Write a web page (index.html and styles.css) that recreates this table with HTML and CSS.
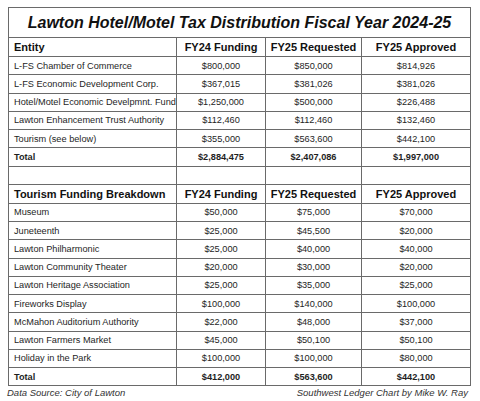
FILE: index.html
```html
<!DOCTYPE html>
<html lang="en">
<head>
    <meta charset="UTF-8">
    <meta name="viewport" content="width=device-width, initial-scale=1.0">
    <title>Lawton Hotel/Motel Tax Distribution</title>
    <link rel="stylesheet" href="styles.css">
</head>
<body>

<div class="sheet">
    <table class="tax-table">
        <colgroup>
            <col class="col-name">
            <col class="col-fy24">
            <col class="col-req">
            <col class="col-appr">
        </colgroup>
        <tr class="title-row">
            <th colspan="4">Lawton Hotel/Motel Tax Distribution Fiscal Year 2024-25</th>
        </tr>
        <tr class="head-row">
            <th class="name">Entity</th>
            <th>FY24 Funding</th>
            <th>FY25 Requested</th>
            <th>FY25 Approved</th>
        </tr>
        <tr><td class="name">L-FS Chamber of Commerce</td><td>$800,000</td><td>$850,000</td><td>$814,926</td></tr>
        <tr><td class="name">L-FS Economic Development Corp.</td><td>$367,015</td><td>$381,026</td><td>$381,026</td></tr>
        <tr><td class="name">Hotel/Motel Economic Develpmnt. Fund</td><td>$1,250,000</td><td>$500,000</td><td>$226,488</td></tr>
        <tr><td class="name">Lawton Enhancement Trust Authority</td><td>$112,460</td><td>$112,460</td><td>$132,460</td></tr>
        <tr><td class="name">Tourism (see below)</td><td>$355,000</td><td>$563,600</td><td>$442,100</td></tr>
        <tr class="total"><td class="name">Total</td><td>$2,884,475</td><td>$2,407,086</td><td>$1,997,000</td></tr>
        <tr><td></td><td></td><td></td><td></td></tr>
        <tr class="head-row">
            <th class="name">Tourism Funding Breakdown</th>
            <th>FY24 Funding</th>
            <th>FY25 Requested</th>
            <th>FY25 Approved</th>
        </tr>
        <tr><td class="name">Museum</td><td>$50,000</td><td>$75,000</td><td>$70,000</td></tr>
        <tr><td class="name">Juneteenth</td><td>$25,000</td><td>$45,500</td><td>$20,000</td></tr>
        <tr><td class="name">Lawton Philharmonic</td><td>$25,000</td><td>$40,000</td><td>$40,000</td></tr>
        <tr><td class="name">Lawton Community Theater</td><td>$20,000</td><td>$30,000</td><td>$20,000</td></tr>
        <tr><td class="name">Lawton Heritage Association</td><td>$25,000</td><td>$35,000</td><td>$25,000</td></tr>
        <tr><td class="name">Fireworks Display</td><td>$100,000</td><td>$140,000</td><td>$100,000</td></tr>
        <tr><td class="name">McMahon Auditorium Authority</td><td>$22,000</td><td>$48,000</td><td>$37,000</td></tr>
        <tr><td class="name">Lawton Farmers Market</td><td>$45,000</td><td>$50,100</td><td>$50,100</td></tr>
        <tr><td class="name">Holiday in the Park</td><td>$100,000</td><td>$100,000</td><td>$80,000</td></tr>
        <tr class="total"><td class="name">Total</td><td>$412,000</td><td>$563,600</td><td>$442,100</td></tr>
    </table>

    <div class="footer">
        <span>Data Source: City of Lawton</span>
        <span>Southwest Ledger Chart by Mike W. Ray</span>
    </div>
</div>

</body>
</html>
```

FILE: styles.css
```css
body {
    margin: 0;
    background-color: #fff;
    font-family: "Liberation Sans", Arial, sans-serif;
    color: #1e1e1e;
}
.sheet {
    width: 462px;
    padding: 7px 0 0 8px;
}
.tax-table {
    width: 462px;
    border-collapse: collapse;
    table-layout: fixed;
}
.col-name { width: 168px; }
.col-fy24 { width: 89px; }
.col-req { width: 96px; }
.col-appr { width: 109px; }

.tax-table td,
.tax-table th {
    border: 1px solid #6a6a6a;
    padding: 0 4px;
    text-align: center;
    white-space: nowrap;
    overflow: hidden;
}
.tax-table tr {
    height: 18.25px;
}
.tax-table td {
    font-size: 9.2px;
}
.tax-table .name {
    text-align: left;
    padding: 0 0 0 5px;
}
.tax-table .title-row {
    height: 30px;
}
.title-row th {
    font-size: 16px;
    font-style: italic;
    font-weight: bold;
    color: #111;
}
.tax-table .head-row {
    height: 19px;
}
.head-row th {
    font-size: 11px;
    font-weight: bold;
    color: #111;
}
.total td {
    font-weight: bold;
}
.footer {
    display: flex;
    justify-content: space-between;
    padding: 1px 2px 0 0;
    margin-left: -1px;
    font-size: 9.5px;
    font-style: italic;
    color: #333;
}
```
